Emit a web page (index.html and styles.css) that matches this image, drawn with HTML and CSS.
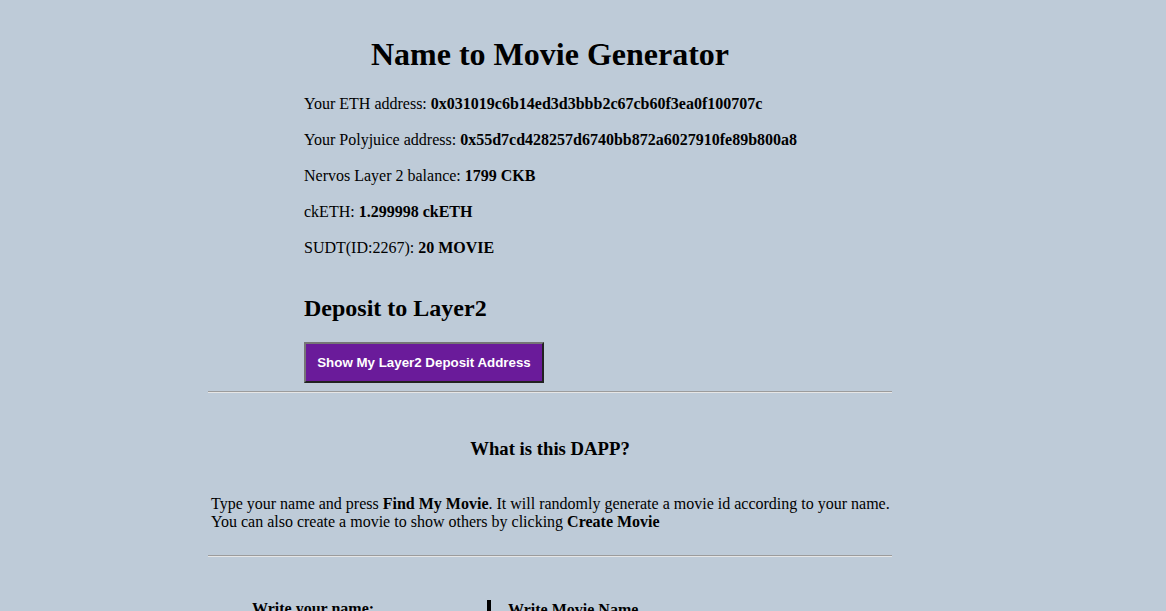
FILE: index.html
```html
<!DOCTYPE html>
<html lang="en">
<head>
<meta charset="utf-8">
<title>Name to Movie Generator</title>
<link rel="stylesheet" href="styles.css">
</head>
<body>
<div class="wrapper">
  <h1 class="title">Name to Movie Generator</h1>
  <div class="info">
    <p class="line">Your ETH address: <b>0x031019c6b14ed3d3bbb2c67cb60f3ea0f100707c</b></p>
    <p class="line">Your Polyjuice address: <b>0x55d7cd428257d6740bb872a6027910fe89b800a8</b></p>
    <p class="line">Nervos Layer 2 balance: <b>1799 CKB</b></p>
    <p class="line">ckETH: <b>1.299998 ckETH</b></p>
    <p class="line">SUDT(ID:2267): <b>20 MOVIE</b></p>
    <h2 class="deposit-title">Deposit to Layer2</h2>
    <button class="deposit-btn" type="button">Show My Layer2 Deposit Address</button>
  </div>
  <hr class="divider divider-first">
  <h3 class="about-title">What is this DAPP?</h3>
  <p class="about-text">Type your name and press <b>Find My Movie</b>. It will randomly generate a movie id according to your name.<br>You can also create a movie to show others by clicking <b>Create Movie</b></p>
  <hr class="divider divider-second">
  <div class="forms">
    <div class="form-col form-left"><b>Write your name:</b></div>
    <div class="form-col form-right"><b>Write Movie Name</b></div>
  </div>
</div>
</body>
</html>
```

FILE: styles.css
```css
html, body {
  margin: 0;
  padding: 0;
  background: #becbd8;
}

body {
  font-family: "Liberation Serif", "Times New Roman", serif;
  font-size: 16px;
  color: #000;
  overflow: hidden;
}

.wrapper {
  width: 684px;
  margin-left: 208px;
  padding-top: 36px;
}

.title {
  margin: 0 0 21px;
  font-size: 32px;
  line-height: 37px;
  font-weight: bold;
  text-align: center;
}

.info {
  padding-left: 96px;
}

.line {
  margin: 0 0 16px;
  line-height: 20px;
}

.deposit-title {
  margin: 36px 0 0;
  font-size: 24px;
  line-height: 28px;
  font-weight: bold;
}

.deposit-btn {
  display: block;
  margin-top: 20px;
  width: 240px;
  height: 41px;
  padding: 0;
  background: #6a1b9a;
  color: #fff;
  font-family: "Liberation Sans", Arial, sans-serif;
  font-size: 13.33px;
  font-weight: bold;
  border-style: solid;
  border-width: 2px;
  border-color: #767676 #222 #222 #767676;
}

.divider {
  height: 0;
  margin: 0;
  border: 0;
  border-top: 1px solid #9c9c9c;
  border-bottom: 1px solid #e6e6e6;
}

.divider-first {
  margin-top: 8px;
}

.about-title {
  margin: 45px 0 0;
  font-size: 18.72px;
  line-height: 22px;
  font-weight: bold;
  text-align: center;
}

.about-text {
  margin: 35px 0 24px;
  padding-left: 3px;
  line-height: 18px;
  white-space: nowrap;
}

.forms {
  display: flex;
  margin-top: 43px;
}

.form-col {
  line-height: 18px;
}

.form-left {
  width: 235px;
  padding-left: 44px;
}

.form-right {
  border-left: 4px solid #000;
  padding-left: 17px;
  padding-top: 1px;
  height: 60px;
}
```
